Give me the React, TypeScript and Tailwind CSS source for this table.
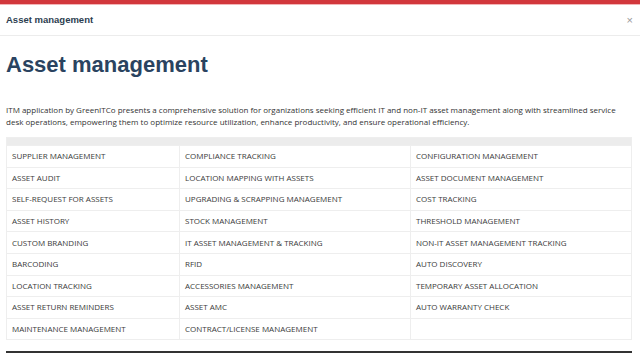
import React from 'react';

const rows: [string, string, string][] = [
  ['SUPPLIER MANAGEMENT', 'COMPLIANCE TRACKING', 'CONFIGURATION MANAGEMENT'],
  ['ASSET AUDIT', 'LOCATION MAPPING WITH ASSETS', 'ASSET DOCUMENT MANAGEMENT'],
  ['SELF-REQUEST FOR ASSETS', 'UPGRADING & SCRAPPING MANAGEMENT', 'COST TRACKING'],
  ['ASSET HISTORY', 'STOCK MANAGEMENT', 'THRESHOLD MANAGEMENT'],
  ['CUSTOM BRANDING', 'IT ASSET MANAGEMENT & TRACKING', 'NON-IT ASSET MANAGEMENT TRACKING'],
  ['BARCODING', 'RFID', 'AUTO DISCOVERY'],
  ['LOCATION TRACKING', 'ACCESSORIES MANAGEMENT', 'TEMPORARY ASSET ALLOCATION'],
  ['ASSET RETURN REMINDERS', 'ASSET AMC', 'AUTO WARRANTY CHECK'],
  ['MAINTENANCE MANAGEMENT', 'CONTRACT/LICENSE MANAGEMENT', ''],
];

export default function App() {
  return (
    <div className="w-[640px] h-[353px] overflow-hidden bg-white">
      <div className="h-[4px] bg-[#d2373c]" />
      <div className="h-[1px] bg-[#f3b4b6]" />
      <div className="flex items-center justify-between h-[31px] px-[6px] border-b border-[#ececec]">
        <span className="text-[9.5px] font-bold text-[#2c3e50] [font-family:'Liberation_Sans',Arial,sans-serif]">
          Asset management
        </span>
        <span className="text-[11px] leading-none text-[#999] [font-family:'Liberation_Sans',Arial,sans-serif] mr-[1px]">×</span>
      </div>
      <div className="px-[6px]">
        <h1 className="mt-[14px] text-[22px] leading-[30px] font-bold text-[#2a4360] [font-family:'Liberation_Sans',Arial,sans-serif]">
          Asset management
        </h1>
        <p className="mt-[24px] text-[8px] leading-[12px] text-[#333] [font-family:'Open_Sans',sans-serif]">
          ITM application by GreenITCo presents a comprehensive solution for organizations seeking efficient IT and non-IT asset management along with streamlined service desk operations, empowering them to optimize resource utilization, enhance productivity, and ensure operational efficiency.
        </p>
        <div className="mt-[9px] w-[626px] border border-[#eeeeee] [font-family:'Open_Sans',sans-serif]">
          <div className="h-[7px] bg-[#ececec]" />
          {rows.map((r, i) => (
            <div key={i} className="grid grid-cols-[172px_231px_1fr] border-t border-[#eeeeee] h-[21.6px]">
              {r.map((c, j) => (
                <div key={j} className={`flex items-center px-[5px] text-[8px] text-[#3a3a3a] ${j > 0 ? 'border-l border-[#eeeeee]' : ''}`}>
                  {c}
                </div>
              ))}
            </div>
          ))}
        </div>
        <div className="mt-[11px] w-[626px] h-[2px] bg-[#333]" />
      </div>
    </div>
  );
}
